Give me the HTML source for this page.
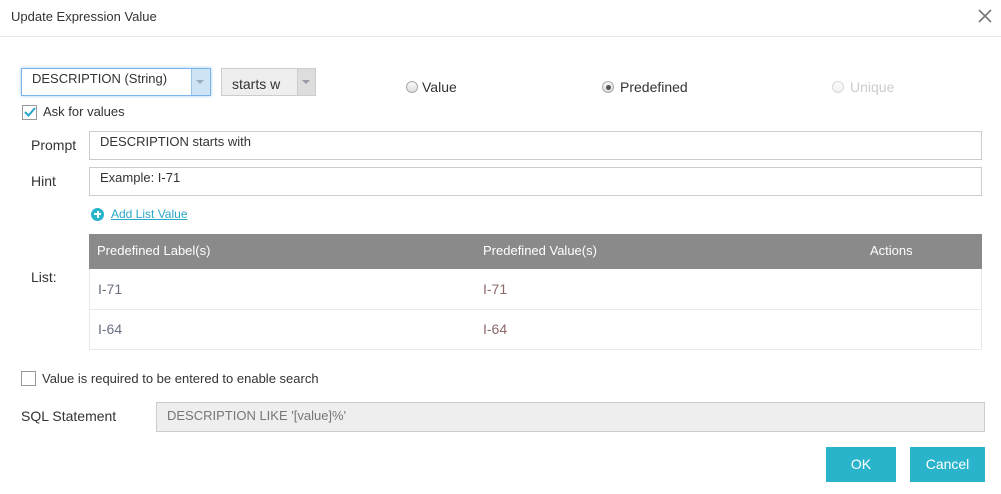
<!DOCTYPE html>
<html><head><style>
*{box-sizing:border-box;margin:0;padding:0}
body{width:1001px;height:494px;background:#fff;font-family:"Liberation Sans",sans-serif;color:#333;position:relative;overflow:hidden;font-size:14px}
.a{position:absolute;white-space:nowrap}
.inp{position:absolute;border:1px solid #ccc;background:#fff}
.rad{position:absolute;width:12px;height:12px;border-radius:50%;border:1px solid #aaa;background:linear-gradient(#fafafa,#ddd)}
.btn{position:absolute;background:#29b4cc;color:#fff;text-align:center;line-height:34px;font-size:14px}
</style></head><body>
<div class="a" style="left:11px;top:9px;font-size:13px;color:#333">Update Expression Value</div>
<svg class="a" style="left:978px;top:9px" width="14" height="14"><path d="M1 1L13 13M13 1L1 13" stroke="#777" stroke-width="1.6"/></svg>
<div class="a" style="left:0;top:36px;width:1001px;height:1px;background:#e3e8ee"></div>

<div class="inp" style="left:21px;top:68px;width:190px;height:28px;border-color:#7ab4e8;box-shadow:0 0 3px #9cc8f0"></div>
<div class="a" style="left:32px;top:71px;font-size:13px">DESCRIPTION (String)</div>
<div class="a" style="left:191px;top:69px;width:19px;height:26px;background:#cfe3f7;border-left:1px solid #9cc4ea"></div>
<div class="a" style="left:196px;top:80px;border:4px solid transparent;border-top:4px solid #9ab;"></div>

<div class="inp" style="left:221px;top:68px;width:95px;height:28px;background:#eee"></div>
<div class="a" style="left:232px;top:76px;font-size:14px">starts w</div>
<div class="a" style="left:297px;top:69px;width:18px;height:26px;background:#ddd;border-left:1px solid #ccc"></div>
<div class="a" style="left:302px;top:80px;border:4px solid transparent;border-top:4px solid #99a;"></div>

<div class="inp" style="left:22px;top:105px;width:15px;height:15px;border-color:#999"></div>
<svg class="a" style="left:24px;top:106px" width="12" height="12"><path d="M1 6L4.5 9.5L11 2" stroke="#2aa6c8" stroke-width="2" fill="none"/></svg>
<div class="a" style="left:43px;top:104px;font-size:13px">Ask for values</div>

<div class="rad" style="left:406px;top:81px"></div>
<div class="a" style="left:422px;top:79px;font-size:14px">Value</div>
<div class="rad" style="left:602px;top:81px"></div>
<div class="a" style="left:606px;top:85px;width:5px;height:5px;border-radius:50%;background:#555"></div>
<div class="a" style="left:620px;top:79px;font-size:14px">Predefined</div>
<div class="rad" style="left:832px;top:81px;opacity:.45"></div>
<div class="a" style="left:850px;top:79px;font-size:14px;color:#ccc">Unique</div>

<div class="a" style="left:31px;top:137px;font-size:14px">Prompt</div>
<div class="inp" style="left:89px;top:131px;width:893px;height:29px"></div>
<div class="a" style="left:100px;top:134px;font-size:13px">DESCRIPTION starts with</div>
<div class="a" style="left:31px;top:173px;font-size:14px">Hint</div>
<div class="inp" style="left:89px;top:167px;width:893px;height:29px"></div>
<div class="a" style="left:100px;top:170px;font-size:13px">Example: I-71</div>

<div class="a" style="left:91px;top:208px;width:13px;height:13px;border-radius:50%;background:#29b4cc"></div>
<div class="a" style="left:94px;top:213px;width:7px;height:2px;background:#fff"></div>
<div class="a" style="left:96.5px;top:210.5px;width:2px;height:7px;background:#fff"></div>
<div class="a" style="left:111px;top:207px;font-size:12px;color:#29a8c8;text-decoration:underline">Add List Value</div>

<div class="a" style="left:31px;top:269px;font-size:14px">List:</div>
<div class="a" style="left:89px;top:234px;width:893px;height:116px;border:1px solid #e6eaee"></div>
<div class="a" style="left:89px;top:234px;width:893px;height:35px;background:#8a8a8a"></div>
<div class="a" style="left:97px;top:243px;font-size:13px;color:#fff">Predefined Label(s)</div>
<div class="a" style="left:483px;top:243px;font-size:13px;color:#fff">Predefined Value(s)</div>
<div class="a" style="left:870px;top:243px;font-size:13px;color:#fff">Actions</div>
<div class="a" style="left:89px;top:309px;width:893px;height:1px;background:#e6eaee"></div>
<div class="a" style="left:98px;top:281px;color:#6a7080">I-71</div>
<div class="a" style="left:483px;top:281px;color:#8a6a6a">I-71</div>
<div class="a" style="left:98px;top:321px;color:#6a7080">I-64</div>
<div class="a" style="left:483px;top:321px;color:#8a6a6a">I-64</div>

<div class="inp" style="left:21px;top:371px;width:15px;height:15px;border-color:#999"></div>
<div class="a" style="left:42px;top:371px;font-size:13px">Value is required to be entered to enable search</div>

<div class="a" style="left:21px;top:408px;font-size:14px">SQL Statement</div>
<div class="inp" style="left:156px;top:402px;width:829px;height:30px;background:#eee"></div>
<div class="a" style="left:167px;top:408px;font-size:13px;color:#777">DESCRIPTION LIKE '[value]%'</div>

<div class="btn" style="left:826px;top:447px;width:70px;height:35px">OK</div>
<div class="btn" style="left:910px;top:447px;width:75px;height:35px">Cancel</div>
</body></html>
